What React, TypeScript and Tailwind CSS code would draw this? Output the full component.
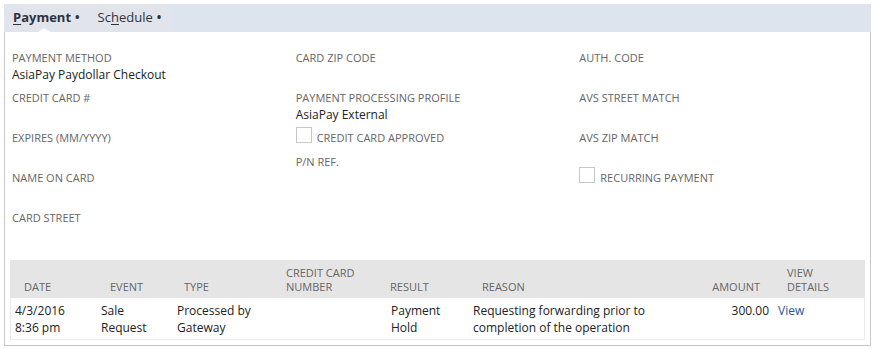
import React from "react";

const font = { fontFamily: '"Open Sans", "Noto Sans", sans-serif' };

function Label({ children }: { children: React.ReactNode }) {
  return <div className="text-[11px] leading-[16px] uppercase text-[#666]">{children}</div>;
}

function Field({ label, value }: { label: string; value?: string }) {
  return (
    <div className="mb-2">
      <Label>{label}</Label>
      <div className="text-[12px] leading-[18px] text-[#222] h-4">{value ?? ""}</div>
    </div>
  );
}

function CheckField({ label }: { label: string }) {
  return (
    <div className="mb-2 flex h-4 items-start">
      <div className="-mt-[3px] h-4 w-4 shrink-0 border border-[#c8c8c8] bg-white" />
      <div className="ml-[5px] text-[11px] leading-[16px] uppercase text-[#666]">{label}</div>
    </div>
  );
}

export default function App() {
  const cols = "grid grid-cols-[86px_76px_104px_110px_82px_1fr_75px_91px]";
  return (
    <div className="bg-white w-[875px] h-[349px] pt-1 pl-1" style={font}>
      <div className="w-[867px]">
        {/* tab bar */}
        <div className="relative flex h-[28px] bg-[#dee4ee]">
          <div className="flex h-full w-[165px] items-center bg-[#e1e4ea] text-[13px] text-[#2f3340]">
            <div className="relative flex h-full items-center pl-[9px] pr-[10px] font-bold">
              <span>
                <span className="underline underline-offset-2">P</span>ayment
              </span>
              <span className="ml-[4px] text-[12px] font-bold">•</span>
              <div className="absolute bottom-0 left-[34px] h-0 w-0 border-x-[6px] border-b-[4px] border-x-transparent border-b-white" />
            </div>
            <div className="flex h-full items-center pl-[8px]">
              <span>
                Sc<span className="underline underline-offset-2">h</span>edule
              </span>
              <span className="ml-[4px] text-[12px] font-bold">•</span>
            </div>
          </div>
        </div>
        {/* panel */}
        <div className="h-[314px] border-x border-b border-[#c8c8c8]">
          <div className="grid grid-cols-3 px-[7px] pt-[18px]">
            <div>
              <Field label="Payment Method" value="AsiaPay Paydollar Checkout" />
              <Field label="Credit Card #" />
              <Field label="Expires (MM/YYYY)" />
              <Field label="Name on Card" />
              <Field label="Card Street" />
            </div>
            <div>
              <Field label="Card Zip Code" />
              <Field label="Payment Processing Profile" value="AsiaPay External" />
              <CheckField label="Credit Card Approved" />
              <Field label="P/N Ref." />
            </div>
            <div>
              <Field label="Auth. Code" />
              <Field label="AVS Street Match" />
              <Field label="AVS Zip Match" />
              <CheckField label="Recurring Payment" />
            </div>
          </div>
          {/* table */}
          <div className="mx-[5px] mt-[10px]">
            <div className={`${cols} items-end bg-[#e5e5e5] pt-[6px] pb-[4px] text-[11px] leading-[14px] uppercase text-[#666]`}>
              <div className="pl-[14px]">Date</div>
              <div className="pl-[14px]">Event</div>
              <div className="pl-[12px]">Type</div>
              <div className="pl-[10px]">
                Credit Card
                <br />
                Number
              </div>
              <div className="pl-[4px]">Result</div>
              <div className="pl-[14px]">Reason</div>
              <div className="pr-[14px] text-right">Amount</div>
              <div className="pl-[13px]">
                View
                <br />
                Details
              </div>
            </div>
            <div className={`${cols} border-x border-b border-[#ebebeb] pt-[4px] pb-[3px] text-[12px] leading-[17px] text-[#222]`}>
              <div className="pl-[4px]">
                4/3/2016
                <br />
                8:36 pm
              </div>
              <div className="pl-[4px]">
                Sale
                <br />
                Request
              </div>
              <div className="pl-[4px]">
                Processed by
                <br />
                Gateway
              </div>
              <div />
              <div className="pl-[4px]">
                Payment
                <br />
                Hold
              </div>
              <div className="pl-[4px]">
                Requesting forwarding prior to
                <br />
                completion of the operation
              </div>
              <div className="pr-[4px] text-right">300.00</div>
              <div className="pl-[5px] text-[#24569a]">View</div>
            </div>
          </div>
        </div>
      </div>
    </div>
  );
}
